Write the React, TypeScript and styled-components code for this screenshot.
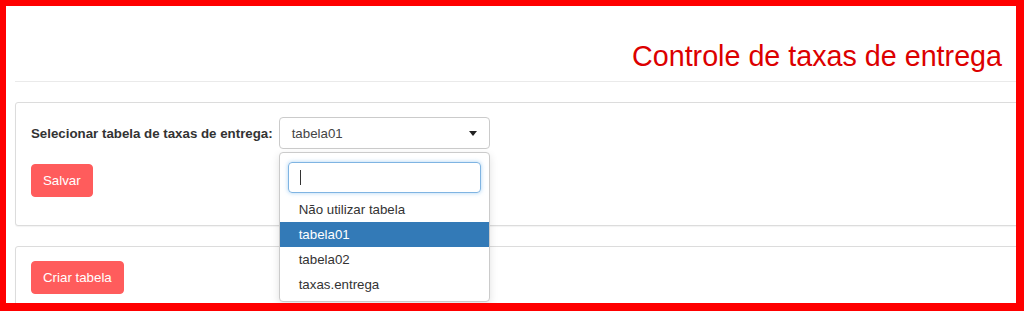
import React from 'react';
import styled, { createGlobalStyle } from 'styled-components';

const GlobalStyle = createGlobalStyle`
  html, body {
    margin: 0;
    padding: 0;
    background: #fff;
  }
  body {
    font-family: "Liberation Sans", Arial, sans-serif;
    font-size: 13.3px;
    color: #333;
  }
  * {
    box-sizing: border-box;
  }
`;

const Frame = styled.div`
  width: 1024px;
  height: 311px;
  border-style: solid;
  border-color: #ff0000;
  border-width: 6px 8px 8px 6px;
  background: #fff;
  overflow: hidden;
`;

const Page = styled.div`
  padding-left: 9px;
`;

const Header = styled.div`
  display: flex;
  justify-content: flex-end;
  padding: 34px 14px 9px 0;
  border-bottom: 1px solid #eaeaea;
`;

const Title = styled.h1`
  margin: 0;
  font-size: 28.7px;
  line-height: 32px;
  font-weight: 400;
  color: #dc0000;
`;

const Panel = styled.div<{ $pad?: string }>`
  margin: 20px -10px 0 0;
  border: 1px solid #dcdcdc;
  border-radius: 3px;
  background: #fff;
  box-shadow: 0 1px 1px rgba(0, 0, 0, 0.05);
  padding: ${({ $pad }) => $pad || '14px 15px'};
`;

const FieldRow = styled.div`
  display: flex;
  align-items: center;
  gap: 6px;
  margin-bottom: 15px;
`;

const Label = styled.label`
  font-weight: 700;
  font-size: 13.3px;
  color: #333;
`;

const SelectWrap = styled.div`
  position: relative;
  width: 211px;
`;

const SelectBox = styled.div`
  height: 32px;
  display: flex;
  align-items: center;
  justify-content: space-between;
  padding: 0 12px;
  border: 1px solid #cbcbcb;
  border-radius: 4px;
  background: #fff;
  color: #444;
`;

const Arrow = styled.span`
  width: 0;
  height: 0;
  border-top: 5px solid #222;
  border-left: 4px solid transparent;
  border-right: 4px solid transparent;
`;

const Dropdown = styled.div`
  position: absolute;
  top: 35px;
  left: 0;
  width: 211px;
  border: 1px solid #cbcbcb;
  border-radius: 4px;
  background: #fff;
  box-shadow: 0 3px 8px rgba(0, 0, 0, 0.12);
  padding-bottom: 4px;
  z-index: 10;
`;

const SearchArea = styled.div`
  padding: 9px 8px 4px;
`;

const SearchInput = styled.div`
  height: 31px;
  border: 1px solid #7fb4e2;
  border-radius: 4px;
  box-shadow: 0 0 4px rgba(102, 175, 233, 0.55);
  display: flex;
  align-items: center;
  padding-left: 11px;
`;

const Caret = styled.span`
  width: 1px;
  height: 15px;
  background: #333;
`;

const Option = styled.div<{ $active?: boolean }>`
  height: 25px;
  line-height: 25px;
  padding: 0 19px;
  background: ${({ $active }) => ($active ? '#337ab7' : 'transparent')};
  color: ${({ $active }) => ($active ? '#fff' : '#333')};
`;

const Button = styled.button`
  display: inline-block;
  height: 33px;
  padding: 0 11px;
  border: 1px solid #ff5c5c;
  border-radius: 4px;
  background: #ff5c5c;
  color: #fff;
  font-family: "Liberation Sans", Arial, sans-serif;
  font-size: 13.3px;
  line-height: 31px;
  cursor: pointer;
`;

const options = ['Não utilizar tabela', 'tabela01', 'tabela02', 'taxas.entrega'];

const App: React.FC = () => {
  const selected = 'tabela01';

  return (
    <>
      <GlobalStyle />
      <Frame>
        <Page>
          <Header>
            <Title>Controle de taxas de entrega</Title>
          </Header>

          <Panel $pad="14px 15px 28px">
            <FieldRow>
              <Label>Selecionar tabela de taxas de entrega:</Label>
              <SelectWrap>
                <SelectBox>
                  <span>{selected}</span>
                  <Arrow />
                </SelectBox>
                <Dropdown>
                  <SearchArea>
                    <SearchInput>
                      <Caret />
                    </SearchInput>
                  </SearchArea>
                  {options.map((opt) => (
                    <Option key={opt} $active={opt === selected}>
                      {opt}
                    </Option>
                  ))}
                </Dropdown>
              </SelectWrap>
            </FieldRow>
            <Button>Salvar</Button>
          </Panel>

          <Panel>
            <Button>Criar tabela</Button>
          </Panel>
        </Page>
      </Frame>
    </>
  );
};

export default App;
